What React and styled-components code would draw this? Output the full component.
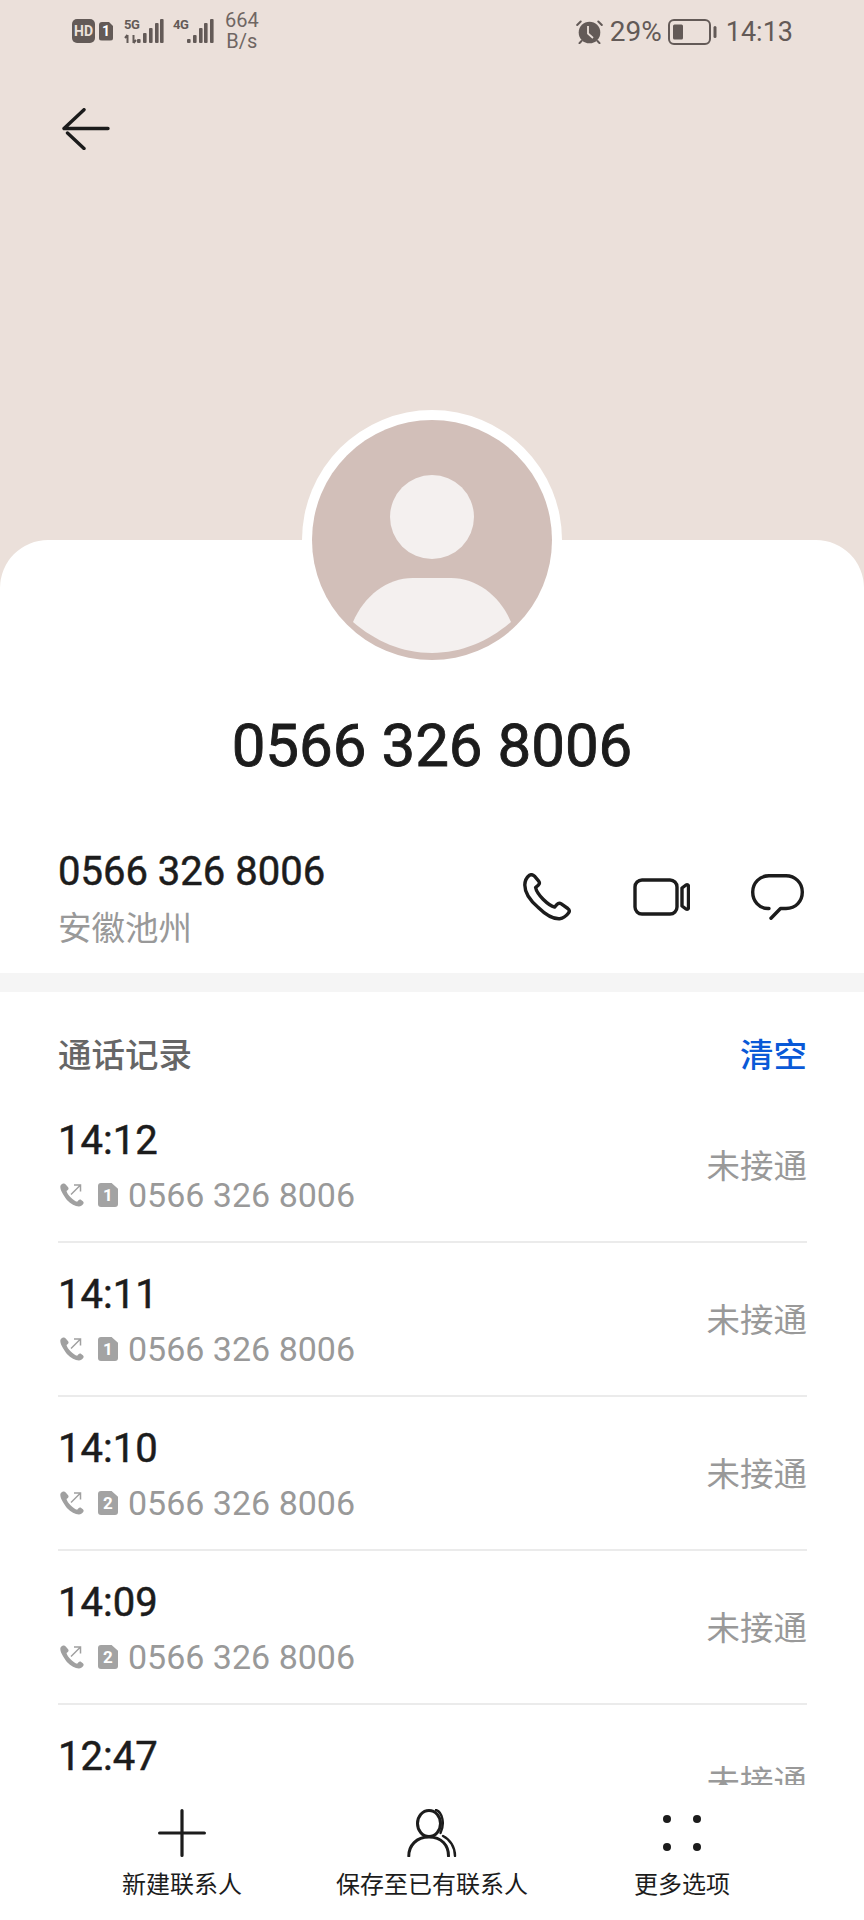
import React from "react";
import styled, { createGlobalStyle } from "styled-components";

const calls = [
  { time: "14:12", sim: 1 },
  { time: "14:11", sim: 1 },
  { time: "14:10", sim: 2 },
  { time: "14:09", sim: 2 },
  { time: "12:47", sim: 2 },
];

const PHONE = "0566 326 8006";

// [x, height] of each signal bar
const bars5g = [[13, 4], [19, 10], [25, 15], [31, 20], [36, 24]];
const bars4g = [[14, 4], [20, 8], [26, 15], [31, 20], [37, 24]];

export default function App() {
  return (
    <Page>
      <GlobalStyle />
      <Hero>
        <StatusBar>
          <StatusLeft>
            <HdBadge>HD</HdBadge>
            <SimBadge $size={14} $height={19} $font={14} $color="#635a57">1</SimBadge>
            <Signal label="5G" bars={bars5g} $gap={7} activity />
            <Signal label="4G" bars={bars4g} $gap={4} />
            <Speed>
              <span>664</span>
              <span>B/s</span>
            </Speed>
          </StatusLeft>
          <StatusRight>
            <AlarmIcon />
            <Percent>29%</Percent>
            <BatteryIcon />
            <Clock>14:13</Clock>
          </StatusRight>
        </StatusBar>
        <Toolbar>
          <BackIcon />
        </Toolbar>
      </Hero>

      <Sheet>
        <AvatarRing>
          <AvatarIcon />
        </AvatarRing>
        <Name>{PHONE}</Name>

        <ContactRow>
          <ContactText>
            <ContactNumber>{PHONE}</ContactNumber>
            <ContactPlace>安徽池州</ContactPlace>
          </ContactText>
          <Actions>
            <PhoneIcon />
            <VideoIcon />
            <ChatIcon />
          </Actions>
        </ContactRow>

        <Band />

        <History>
          <HistoryHeader>
            <HistoryTitle>通话记录</HistoryTitle>
            <ClearButton>清空</ClearButton>
          </HistoryHeader>
          {calls.map((call) => (
            <CallRow key={call.time}>
              <div>
                <CallTime>{call.time}</CallTime>
                <CallMeta>
                  <OutgoingIcon />
                  <SimBadge $size={20} $height={24} $font={17} $color="#a3a3a3">{call.sim}</SimBadge>
                  <CallNumber>{PHONE}</CallNumber>
                </CallMeta>
              </div>
              <CallStatus>未接通</CallStatus>
            </CallRow>
          ))}
        </History>

        <BottomBar>
          <BottomItem>
            <PlusIcon />
            <BottomLabel>新建联系人</BottomLabel>
          </BottomItem>
          <BottomItem>
            <PersonIcon />
            <BottomLabel>保存至已有联系人</BottomLabel>
          </BottomItem>
          <BottomItem>
            <DotsIcon />
            <BottomLabel>更多选项</BottomLabel>
          </BottomItem>
        </BottomBar>
      </Sheet>
    </Page>
  );
}

function Signal({ label, bars, activity, $gap }) {
  return (
    <SignalBox $gap={$gap}>
      <SignalLabel>{label}</SignalLabel>
      <svg width="41" height="25" viewBox="0 0 41 25" fill="#635a57">
        {activity && (
          <path d="M3.500 16v8M3.500 16 1 19M9.500 16v8M9.500 24 12 21" stroke="#635a57" strokeWidth="2" fill="none" />
        )}
        {bars.map(([x, h]) => (
          <rect key={x} x={x} y={24 - h} width="3.600" height={h} rx="1" />
        ))}
      </svg>
    </SignalBox>
  );
}

const AlarmIcon = () => (
  <svg width="27" height="24" viewBox="0 0 27 24" fill="none">
    <circle cx="13.500" cy="12.500" r="10.800" fill="#635a57" />
    <path d="M1.200 5 4.700 1.500M25.800 5 22.300 1.500M5.500 21l-2 2.200M21.500 21l2 2.200" stroke="#635a57" strokeWidth="2" strokeLinecap="round" />
    <path d="M12 6v7.500l5 4.500" stroke="#ebe0da" strokeWidth="1.800" />
  </svg>
);

const BatteryIcon = () => (
  <svg width="49" height="26" viewBox="0 0 49 26" fill="none">
    <rect x="1" y="1" width="41" height="24" rx="5" stroke="#635a57" strokeWidth="2" />
    <rect x="5" y="5.500" width="10" height="15" rx="1.500" fill="#635a57" />
    <rect x="45.500" y="7" width="3" height="12" rx="1.500" fill="#635a57" />
  </svg>
);

const BackIcon = () => (
  <svg width="48" height="42" viewBox="0 0 48 42" fill="none" stroke="#1b1b1b" strokeWidth="3.400" strokeLinecap="round">
    <path d="M2 20.500h44M2 20.500 22 1.700M5.500 25 22 40.500" />
  </svg>
);

const AvatarIcon = () => (
  <svg width="240" height="240" viewBox="0 0 240 240">
    <circle cx="120" cy="120" r="120" fill="#d2bfb9" />
    <circle cx="120" cy="97" r="42" fill="#f4f0ef" />
    <path
      d="M41 202C52 176 75 158 101 158h38c26 0 49 18 60 44-22 19-49 31-79 31s-57-12-79-31z"
      fill="#f4f0ef"
    />
  </svg>
);

const PhoneIcon = () => (
  <svg width="48" height="48" viewBox="0 0 48 48" fill="none" stroke="#1c1c1c" strokeWidth="3.400" strokeLinejoin="round">
    <path d="M6.500 2.200c1.800-.9 3.600-.5 5 1l4 4.600c1.200 1.500 1 3.200-.3 4.400l-2.600 2.300c.6 3.300 3 7.100 7.500 11.800 4.500 4.500 8.200 7 11.500 7.800l2.400-2.700c1.200-1.300 2.800-1.500 4.300-.5l6.500 4.600c1.500 1.200 1.800 3 .7 4.600-2.400 3.200-5.300 5.200-8.800 5.600-6 .4-14-3.900-21.700-11.500C6.300 26.800 1.800 18.200 1.800 12c.1-4 2-7.700 4.700-9.800z" />
  </svg>
);

const VideoIcon = () => (
  <svg width="58" height="38" viewBox="-1 0 58 38" fill="none" stroke="#1c1c1c" strokeWidth="3.400" strokeLinejoin="round">
    <rect x="2" y="2" width="42" height="34" rx="7" />
    <path d="M49 10 53 7c1.500-.6 2.500.1 2.500 1.500v21c0 1.400-1 2.100-2.500 1.500l-4-3z" />
  </svg>
);

const ChatIcon = () => (
  <svg width="53" height="46" viewBox="0 0 53 46" fill="none" stroke="#1c1c1c" strokeWidth="3.400" strokeLinecap="round" strokeLinejoin="round">
    <path d="M18 34.500h-1C8 34.500 1.700 27 1.700 18 1.700 8.800 9 1.700 18 1.700h17c9 0 16.300 7.100 16.300 16.300 0 9-6.300 16.500-16.300 16.500h-5.500L20 44.300" />
  </svg>
);

const OutgoingIcon = () => (
  <svg width="24" height="24" viewBox="0 0 24 24" fill="none">
    <path
      d="M2.500.8c1.200-.6 2.400-.4 3.200.6l2.400 2.900c.7.900.6 2-.2 2.700L6.500 8c.5 2 2 4.200 4.300 6.500 2.300 2.300 4.400 3.700 6.300 4.200l1.400-1.500c.8-.8 1.800-.9 2.700-.3l1.700 1.300c.9.800 1 1.900.3 2.800-1 1.400-2.600 2.500-4.300 2.500-3.700 0-8-2.500-12-6.500C2.900 11.500.3 7 .3 3.700.3 2.600 1.300 1.400 2.500.8z"
      fill="#a0a0a0"
    />
    <path d="M11 11.500 20.500 2M14 2h6.500v6.500" stroke="#a0a0a0" strokeWidth="1.500" />
  </svg>
);

const PlusIcon = () => (
  <svg width="48" height="48" viewBox="0 0 48 48" stroke="#1c1c1c" strokeWidth="3.200" strokeLinecap="round">
    <path d="M24 1.600v44.800M1.600 24h44.800" />
  </svg>
);

const PersonIcon = () => (
  <svg width="50" height="48" viewBox="0 0 50 48" fill="none" stroke="#1c1c1c" strokeWidth="3" strokeLinecap="round">
    <ellipse cx="22" cy="14.500" rx="11.500" ry="13" />
    <path d="M1.800 47c0-10.500 7.500-19 20.200-19s19.500 8.500 19.500 19" />
    <path d="M29 1c6.500 2 9 14 4.500 23M36 27c7 3.500 12 11 12 20" strokeWidth="2.400" />
  </svg>
);

const DotsIcon = () => (
  <svg width="38" height="36" viewBox="0 0 38 36" fill="#1c1c1c">
    <circle cx="4" cy="4" r="4" />
    <circle cx="34" cy="4" r="4" />
    <circle cx="4" cy="32" r="4" />
    <circle cx="34" cy="32" r="4" />
  </svg>
);

const GlobalStyle = createGlobalStyle`
  html, body {
    margin: 0;
    padding: 0;
    background: #ebe0da;
  }
  body {
    font-family: Roboto, "Noto Sans CJK SC", sans-serif;
  }
`;

const Page = styled.div`
  width: 864px;
  height: 1920px;
  display: flex;
  flex-direction: column;
  overflow: hidden;
  background: #ebe0da;
`;

const Hero = styled.header`
  height: 540px;
  flex-shrink: 0;
`;

const StatusBar = styled.div`
  height: 60px;
  display: flex;
  justify-content: space-between;
  align-items: flex-start;
  padding: 0 71px 0 72px;
  color: #635a57;
`;

const StatusLeft = styled.div`
  display: flex;
  align-items: center;
  height: 62px;
  gap: 4px;
`;

const StatusRight = styled.div`
  display: flex;
  align-items: center;
  height: 63px;
`;

const HdBadge = styled.span`
  width: 23px;
  height: 24px;
  border-radius: 5px;
  background: #635a57;
  color: #ebe0da;
  font-size: 14px;
  font-weight: 700;
  display: flex;
  align-items: center;
  justify-content: center;
`;

const SimBadge = styled.span`
  width: ${(p) => p.$size}px;
  height: ${(p) => p.$height}px;
  background: ${(p) => p.$color};
  color: #fff;
  font-size: ${(p) => p.$font}px;
  font-weight: 700;
  line-height: 1;
  border-radius: 3px;
  clip-path: polygon(0 0, 68% 0, 100% 24%, 100% 100%, 0 100%);
  display: flex;
  align-items: center;
  justify-content: center;
  flex-shrink: 0;
`;

const SignalBox = styled.div`
  position: relative;
  margin-left: ${(p) => p.$gap}px;
  svg {
    display: block;
  }
`;

const SignalLabel = styled.span`
  position: absolute;
  left: 0;
  top: -1px;
  font-size: 13px;
  font-weight: 700;
  letter-spacing: -0.5px;
  color: #635a57;
  line-height: 14px;
`;

const Speed = styled.div`
  display: flex;
  flex-direction: column;
  align-items: center;
  font-size: 20px;
  line-height: 21px;
  margin-left: 7px;
  color: #6f6663;
`;

const Percent = styled.span`
  font-size: 28px;
  margin-left: 7px;
  margin-right: 6px;
`;

const Clock = styled.span`
  font-size: 27px;
  margin-left: 9px;
`;

const Toolbar = styled.div`
  padding: 48px 0 0 62px;
`;

const Sheet = styled.main`
  flex: 1;
  min-height: 0;
  display: flex;
  flex-direction: column;
  background: #fff;
  border-radius: 48px 48px 0 0;
`;

const AvatarRing = styled.div`
  width: 240px;
  height: 240px;
  padding: 10px;
  margin: -130px auto 0;
  border-radius: 50%;
  background: #fff;
  flex-shrink: 0;
  box-sizing: content-box;
  svg {
    display: block;
  }
`;

const Name = styled.h1`
  margin: 0;
  height: 150px;
  flex-shrink: 0;
  display: flex;
  align-items: center;
  justify-content: center;
  font-size: 60px;
  font-weight: 400;
  -webkit-text-stroke: 0.9px #1c1c1c;
  color: #1c1c1c;
`;

const ContactRow = styled.section`
  height: 153px;
  flex-shrink: 0;
  display: flex;
  align-items: center;
  justify-content: space-between;
  padding: 0 57px 0 58px;
`;

const ContactText = styled.div`
  padding-top: 5px;
`;

const ContactNumber = styled.div`
  font-size: 40px;
  font-weight: 400;
  -webkit-text-stroke: 0.5px #1c1c1c;
  line-height: 50px;
  color: #1c1c1c;
`;

const ContactPlace = styled.div`
  margin-top: 9px;
  font-size: 33.500px;
  line-height: 46px;
  color: #999;
`;

const Actions = styled.div`
  display: flex;
  align-items: center;
  gap: 61px;
  padding-right: 3px;
  svg {
    display: block;
  }
`;

const Band = styled.div`
  height: 19px;
  flex-shrink: 0;
  background: #f5f5f5;
`;

const History = styled.section`
  flex: 1;
  min-height: 0;
  overflow: hidden;
  padding: 0 57px 0 58px;
`;

const HistoryHeader = styled.div`
  height: 97px;
  display: flex;
  align-items: center;
  justify-content: space-between;
  padding: 26px 0 3px;
  box-sizing: border-box;
`;

const HistoryTitle = styled.h2`
  margin: 0;
  font-size: 33.500px;
  font-weight: 500;
  color: #666;
`;

const ClearButton = styled.span`
  font-size: 33.500px;
  font-weight: 500;
  color: #0a59d7;
`;

const CallRow = styled.div`
  height: 154px;
  box-sizing: border-box;
  display: flex;
  align-items: center;
  justify-content: space-between;
  padding-top: 2px;
  border-bottom: 2px solid #ebebeb;
`;

const CallTime = styled.div`
  font-size: 40px;
  font-weight: 400;
  -webkit-text-stroke: 0.5px #1c1c1c;
  line-height: 48px;
  color: #1c1c1c;
`;

const CallMeta = styled.div`
  display: flex;
  align-items: center;
  gap: 10px;
  margin-top: 10px;
  svg {
    margin-left: 2px;
    margin-right: 4px;
    flex-shrink: 0;
  }
`;

const CallNumber = styled.span`
  font-size: 34px;
  line-height: 40px;
  color: #999;
`;

const CallStatus = styled.span`
  font-size: 33.500px;
  padding-bottom: 5px;
  color: #999;
`;

const BottomBar = styled.nav`
  height: 135px;
  flex-shrink: 0;
  display: grid;
  grid-template-columns: repeat(3, 250px);
  justify-content: center;
  background: #fff;
  padding-top: 24px;
  box-sizing: border-box;
`;

const BottomItem = styled.div`
  display: flex;
  flex-direction: column;
  align-items: center;
  svg {
    display: block;
    height: 48px;
  }
`;

const BottomLabel = styled.span`
  margin-top: 11px;
  font-size: 24px;
  line-height: 34px;
  color: #1c1c1c;
  white-space: nowrap;
`;
